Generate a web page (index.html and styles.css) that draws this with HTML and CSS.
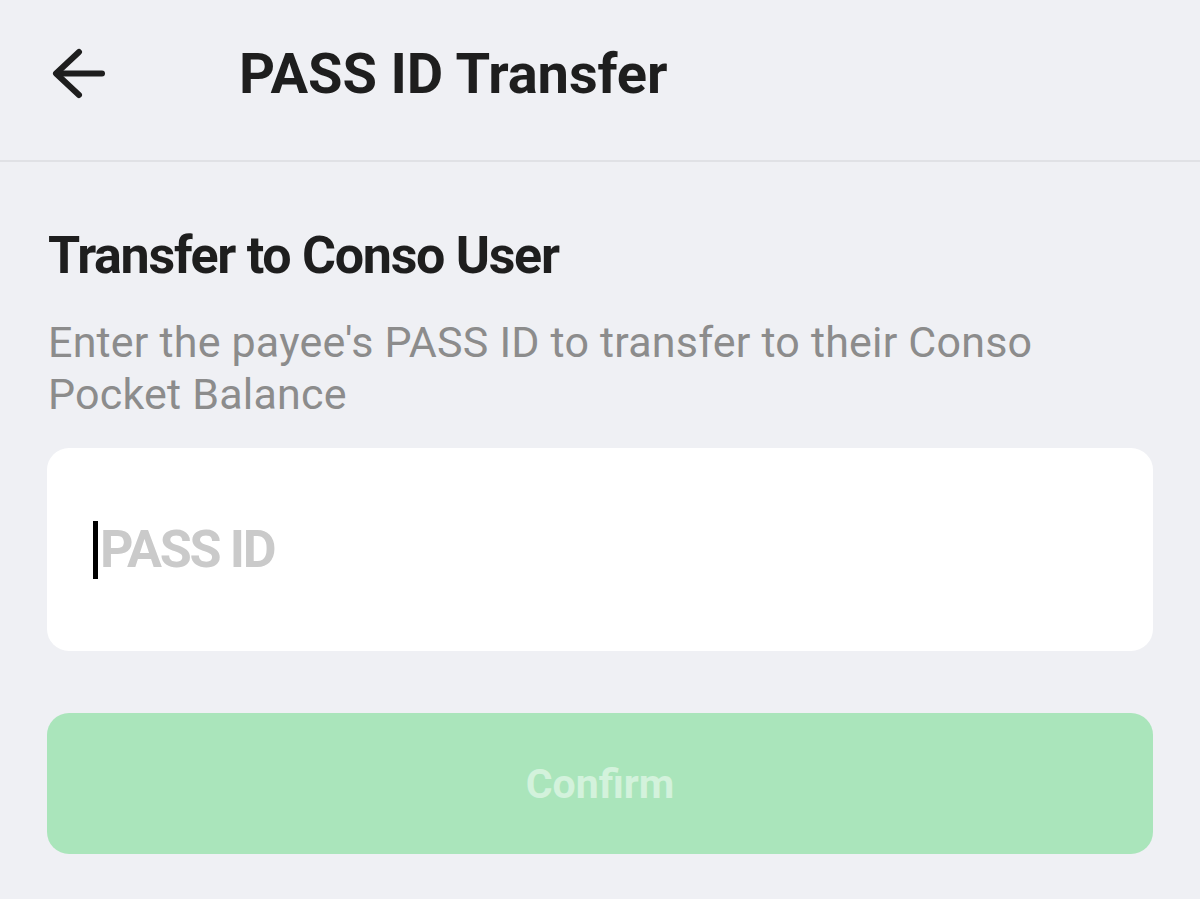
FILE: index.html
```html
<!DOCTYPE html>
<html lang="en">
<head>
<meta charset="utf-8">
<title>PASS ID Transfer</title>
<link rel="stylesheet" href="styles.css">
</head>
<body>
<div class="app">
  <header class="topbar">
    <button class="back" aria-label="Back">
      <svg width="56" height="56" viewBox="0 0 56 56" fill="none" stroke="#1e1e1e" stroke-width="6" stroke-linecap="round" stroke-linejoin="round">
        <path d="M50 25.5H5"/>
        <path d="M27 4L4 25.5L27 47"/>
      </svg>
    </button>
    <h1 class="title">PASS ID Transfer</h1>
  </header>
  <main class="content">
    <h2 class="heading">Transfer to Conso User</h2>
    <p class="desc">Enter the payee's PASS ID to transfer to their Conso Pocket Balance</p>
    <div class="field">
      <span class="caret"></span>
      <span class="placeholder">PASS ID</span>
    </div>
    <button class="confirm">Confirm</button>
  </main>
</div>
</body>
</html>
```
FILE: styles.css
```css
* { box-sizing: border-box; }
html, body {
  margin: 0;
  padding: 0;
  background: #eff0f4;
}
body {
  font-family: Roboto, "Noto Sans", sans-serif;
  width: 1200px;
  height: 899px;
  overflow: hidden;
}
.topbar {
  height: 162px;
  border-bottom: 2px solid #e0e1e5;
  display: flex;
  align-items: center;
  padding-left: 52px;
  padding-bottom: 12px;
}
.back {
  background: none;
  border: 0;
  padding: 0;
  width: 56px;
  height: 56px;
  display: flex;
  margin-top: 4px;
}
.title {
  margin: 0 0 0 131px;
  font-size: 56px;
  font-weight: 700;
  color: #1e1e1e;
  letter-spacing: -0.1px;
}
.content {
  padding: 0 47px;
}
.heading {
  margin: 64px 0 0 1px;
  font-size: 52px;
  font-weight: 700;
  color: #1e1e1e;
  line-height: 60px;
  letter-spacing: -1.3px;
}
.desc {
  margin: 30px 0 0 1px;
  font-size: 43px;
  line-height: 52px;
  color: #8c8c8c;
  font-weight: 400;
  letter-spacing: 0.2px;
}
.field {
  margin-top: 28px;
  height: 203px;
  background: #ffffff;
  border-radius: 22px;
  display: flex;
  align-items: center;
  padding-left: 46px;
}
.caret {
  width: 5px;
  height: 58px;
  background: #000;
}
.placeholder {
  font-size: 52px;
  font-weight: 700;
  color: #cacaca;
  margin-left: 2px;
  letter-spacing: -2.3px;
}
.confirm {
  display: block;
  width: 100%;
  margin-top: 62px;
  height: 141px;
  border: 0;
  border-radius: 22px;
  background: #aae5bb;
  color: #d3f2dc;
  font-family: Roboto, "Noto Sans", sans-serif;
  font-size: 41px;
  font-weight: 700;
}
```
